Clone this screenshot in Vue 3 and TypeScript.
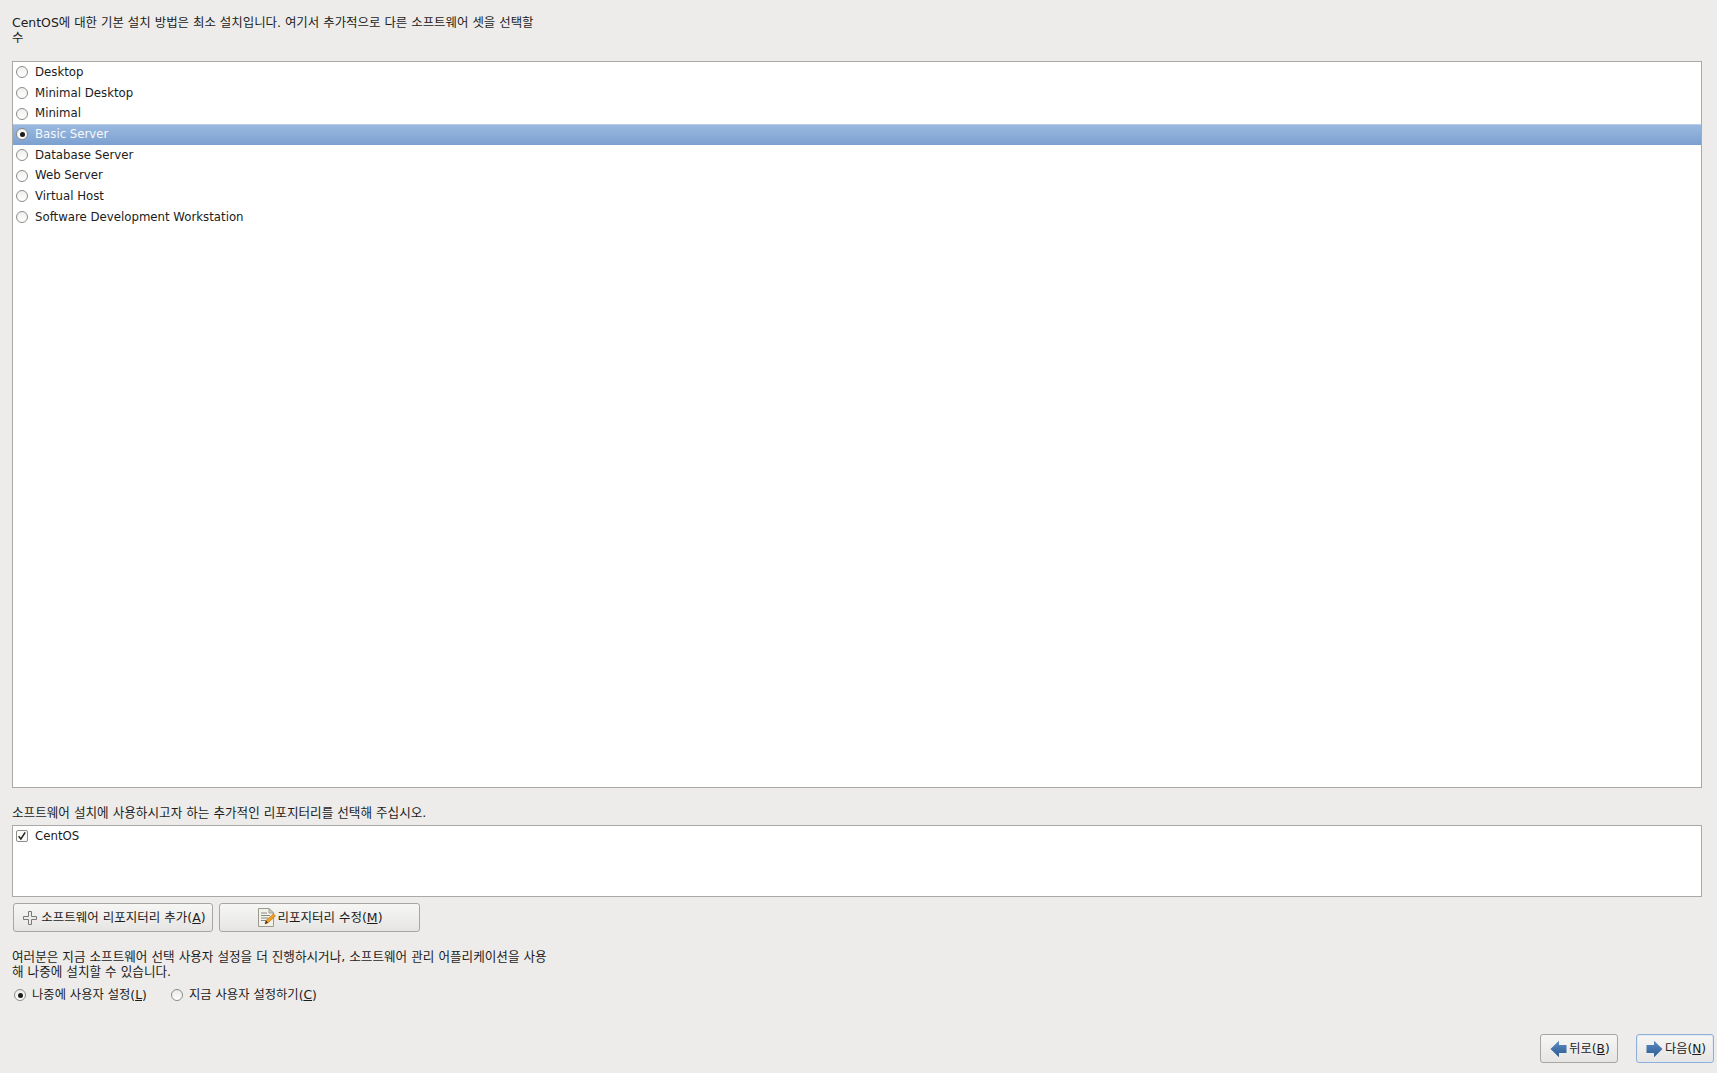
<script setup lang="ts">
const groups: string[] = [
  'Desktop',
  'Minimal Desktop',
  'Minimal',
  'Basic Server',
  'Database Server',
  'Web Server',
  'Virtual Host',
  'Software Development Workstation',
]
const selected = 'Basic Server'
</script>

<template>
  <div class="page">
    <p class="intro">CentOS에 대한 기본 설치 방법은 최소 설치입니다. 여기서 추가적으로 다른 소프트웨어 셋을 선택할 수</p>

    <div class="list main-list">
      <div v-for="g in groups" :key="g" class="row" :class="{ sel: g === selected }">
        <span class="radio" :class="{ on: g === selected }"></span>
        <span class="row-label">{{ g }}</span>
      </div>
    </div>

    <p class="repo-label">소프트웨어 설치에 사용하시고자 하는 추가적인 리포지터리를 선택해 주십시오.</p>

    <div class="list repo-list">
      <div class="repo-row">
        <span class="check">
          <svg width="10" height="10" viewBox="0 0 10 10">
            <path d="M1.6 5.2 L3.9 8 L8.2 1.4" fill="none" stroke="#222" stroke-width="1.5" />
          </svg>
        </span>
        <span class="row-label">CentOS</span>
      </div>
    </div>

    <div class="repo-actions">
      <button class="btn add-btn">
        <svg width="16" height="16" viewBox="0 0 16 16">
          <path d="M6.5 1.5 H9.5 V6.5 H14.5 V9.5 H9.5 V14.5 H6.5 V9.5 H1.5 V6.5 H6.5 Z" fill="#ececea" stroke="#77797a" stroke-width="1" />
        </svg>
        <span>소프트웨어 리포지터리 추가(<u>A</u>)</span>
      </button>
      <button class="btn edit-btn">
        <svg width="18" height="19" viewBox="0 0 18 19">
          <path d="M0.5 0.5 H11 L15.5 5 V18.5 H0.5 Z" fill="#f3f2ea" stroke="#9a9a90" />
          <path d="M11 0.5 V5 H15.5 Z" fill="#d8d8cf" stroke="#9a9a90" />
          <path d="M3 5 H9 M3 7.5 H12 M3 10 H10 M3 12.5 H8" stroke="#8a8a84" stroke-width="1" />
          <path d="M7 16 L8 12.5 L15.5 5.8 L17.5 8 L10 14.8 Z" fill="#f0a020" stroke="#b56a10" stroke-width="0.6" />
          <path d="M7 16 L8 12.5 L10 14.8 Z" fill="#3a3020" />
        </svg>
        <span>리포지터리 수정(<u>M</u>)</span>
      </button>
    </div>

    <p class="note">여러분은 지금 소프트웨어 선택 사용자 설정을 더 진행하시거나, 소프트웨어 관리 어플리케이션을 사용해 나중에 설치할 수 있습니다.</p>

    <div class="custom-choice">
      <label class="choice first">
        <span class="radio on plain"></span>
        <span>나중에 사용자 설정(<u>L</u>)</span>
      </label>
      <label class="choice">
        <span class="radio plain"></span>
        <span>지금 사용자 설정하기(<u>C</u>)</span>
      </label>
    </div>

    <div class="nav">
      <button class="btn nav-btn">
        <svg width="17" height="18" viewBox="0 0 17 18">
          <defs>
            <linearGradient id="arrowL" x1="0" y1="0" x2="0" y2="1">
              <stop offset="0" stop-color="#5f8cc0" />
              <stop offset="1" stop-color="#2a5a95" />
            </linearGradient>
          </defs>
          <path d="M0.5 9 L9 0.8 V5 H16.5 V13 H9 V17.2 Z" fill="url(#arrowL)" />
        </svg>
        <span>뒤로(<u>B</u>)</span>
      </button>
      <button class="btn nav-btn focus">
        <svg width="17" height="18" viewBox="0 0 17 18">
          <defs>
            <linearGradient id="arrowR" x1="0" y1="0" x2="0" y2="1">
              <stop offset="0" stop-color="#5f8cc0" />
              <stop offset="1" stop-color="#2a5a95" />
            </linearGradient>
          </defs>
          <path d="M16.5 9 L8 0.8 V5 H0.5 V13 H8 V17.2 Z" fill="url(#arrowR)" />
        </svg>
        <span>다음(<u>N</u>)</span>
      </button>
    </div>
  </div>
</template>

<style>
html, body {
  margin: 0;
  background: #edecea;
}
</style>

<style scoped>
.page {
  width: 1717px;
  height: 1073px;
  box-sizing: border-box;
  padding: 15px 15px 10px 12px;
  background: #edecea;
  color: #1c1c1c;
  font-family: "DejaVu Sans", "Noto Sans CJK KR", sans-serif;
  font-size: 12.5px;
  line-height: 15px;
  display: flex;
  flex-direction: column;
  overflow: hidden;
}
p { margin: 0; }
u { text-decoration: underline; }
.intro {
  width: 535px;
  height: 30px;
  margin-bottom: 16px;
  font-size: 12.45px;
}
.list {
  box-sizing: border-box;
  width: 1690px;
  background: #fff;
  border: 1px solid #a9a9a6;
}
.main-list {
  height: 727px;
}
.row {
  height: 20.7px;
  display: flex;
  align-items: center;
  padding-left: 3px;
  box-sizing: border-box;
  font-size: 11.75px;
}
.row-label { margin-left: 7px; }
.row.sel {
  color: #f6f8fb;
  background: linear-gradient(#9cbae0, #7ba0d0);
  box-shadow: inset 0 1px 0 #b9cfe9;
}
.radio {
  box-sizing: border-box;
  width: 12px;
  height: 12px;
  border-radius: 50%;
  border: 1px solid #8b8b88;
  background: linear-gradient(#efefed, #fff);
  flex: none;
  display: inline-flex;
  align-items: center;
  justify-content: center;
}
.radio.on::after {
  content: "";
  width: 5px;
  height: 5px;
  border-radius: 50%;
  background: #1a1a1a;
}
.repo-label {
  margin-top: 17px;
  margin-bottom: 5px;
  font-size: 12.6px;
}
.repo-list {
  height: 72px;
}
.repo-row {
  display: flex;
  align-items: center;
  height: 20px;
  padding-left: 3px;
  font-size: 11.75px;
}
.repo-row .row-label { margin-left: 7px; }
.check {
  box-sizing: border-box;
  width: 12px;
  height: 12px;
  border: 1px solid #8b8b88;
  border-radius: 2px;
  display: inline-flex;
  align-items: center;
  justify-content: center;
  background: #fbfbfa;
}
.repo-actions {
  display: flex;
  gap: 6px;
  margin-top: 6px;
  margin-left: 1px;
}
.btn {
  box-sizing: border-box;
  height: 29px;
  display: inline-flex;
  align-items: center;
  justify-content: center;
  padding: 0;
  border: 1px solid #a6a6a3;
  border-radius: 3px;
  background: linear-gradient(#f6f6f5, #e6e5e3);
  color: #1c1c1c;
  font: inherit;
}
.add-btn { width: 200px; gap: 3px; padding-left: 2px; }
.edit-btn { width: 201px; gap: 1px; padding-left: 2px; }
.note {
  width: 538px;
  margin-top: 17px;
  font-size: 12.6px;
}
.custom-choice {
  display: flex;
  margin-top: 8px;
  margin-left: 2px;
  height: 16px;
  font-size: 12.3px;
}
.choice {
  display: flex;
  align-items: center;
  gap: 6px;
}
.choice.first { width: 157px; }
.radio.plain { background: linear-gradient(#e9e9e7, #fff); }
.nav {
  margin-top: auto;
  display: flex;
  justify-content: flex-end;
  gap: 18px;
  margin-right: -12px;
  font-size: 12.2px;
}
.nav-btn {
  width: 78px;
  height: 29px;
  gap: 2px;
  padding: 2px 0 0 2px;
}
.nav-btn svg { position: relative; top: -1px; }
.nav-btn.focus {
  border-color: #8fb0d8;
  box-shadow: inset 0 0 0 1px #dfe8f3;
}
</style>
